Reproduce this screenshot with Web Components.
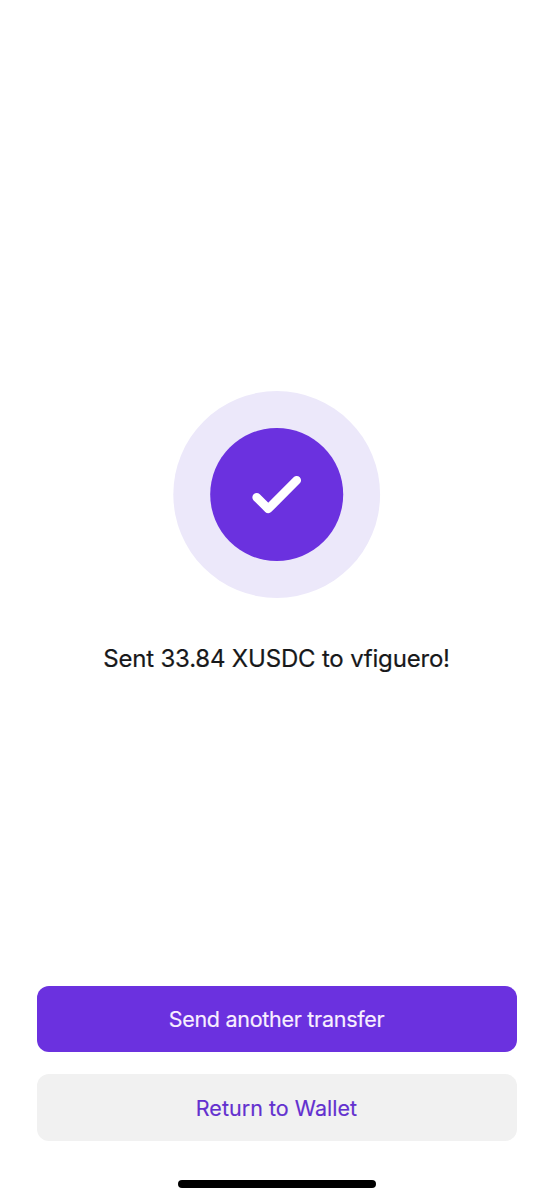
<!DOCTYPE html>
<html lang="en">
<head>
<meta charset="utf-8">
<title>Transfer sent</title>
<style>
html,body{margin:0;height:100%;background:#fff}
</style>
</head>
<body>
<transfer-screen>
  <success-badge slot="badge"></success-badge>
  <status-message slot="message">Sent 33.84 XUSDC to vfiguero!</status-message>
  <action-button slot="actions" variant="primary">Send another transfer</action-button>
  <action-button slot="actions" variant="secondary">Return to Wallet</action-button>
</transfer-screen>
<script>
class Base extends HTMLElement {
  constructor() {
    super();
    this.attachShadow({ mode: 'open' }).innerHTML = this.constructor.markup;
  }
}
class TransferScreen extends Base {
  static markup = `<style>
    :host{display:flex;flex-direction:column;box-sizing:border-box;width:554px;height:1200px;overflow:hidden;background:#fff;font-family:Inter,"Liberation Sans",sans-serif}
    main{flex:1;display:flex;flex-direction:column;align-items:center;padding-top:391px}
    footer{display:flex;flex-direction:column;gap:22.4px;padding:0 37px 39.6px}
    </style>
    <main><slot name="badge"></slot><slot name="message"></slot></main>
    <footer><slot name="actions"></slot></footer>
    <home-indicator></home-indicator>`;
}
class SuccessBadge extends Base {
  static markup = `<style>
    :host{display:block;width:208px;height:207px}
    svg{display:block}
    </style>
    <svg width="208" height="207" viewBox="0 0 208 207" fill="none">
      <circle cx="103.7" cy="103.5" r="103.4" fill="#ece8fa"/>
      <circle cx="103.7" cy="103.5" r="66.5" fill="#6b31df"/>
      <path d="M83.7 106.3 95.3 117.8 123.7 89.3" stroke="#fff" stroke-width="8.7" stroke-linecap="round" stroke-linejoin="round"/>
    </svg>`;
}
class StatusMessage extends Base {
  static markup = `<style>
    :host{display:block;margin-top:45px;font-size:24px;line-height:32px;color:#17181a;white-space:nowrap;letter-spacing:-.19px;margin-right:1px;-webkit-text-stroke:.2px currentColor}
    </style><slot></slot>`;
}
class ActionButton extends Base {
  static markup = `<style>
    :host{display:block;height:66.4px}
    button{display:flex;align-items:center;justify-content:center;width:100%;height:100%;margin:0;padding:0 1px 0 0;border:0;border-radius:12px;font:400 21.5px/28px Inter,"Liberation Sans",sans-serif;letter-spacing:-.28px;white-space:nowrap;background:#6b31df;color:#f8efff;-webkit-text-stroke:.15px currentColor}
    :host([variant=secondary]) button{letter-spacing:.03px;background:#f1f1f1;color:#6330cf}
    </style><button type="button"><slot></slot></button>`;
}
class HomeIndicator extends Base {
  static markup = `<style>
    :host{display:block;align-self:center;width:198px;height:8px;margin-bottom:11.7px;border-radius:4px;background:#000}
    </style>`;
}
customElements.define('home-indicator', HomeIndicator);
customElements.define('success-badge', SuccessBadge);
customElements.define('status-message', StatusMessage);
customElements.define('action-button', ActionButton);
customElements.define('transfer-screen', TransferScreen);
</script>
</body>
</html>
